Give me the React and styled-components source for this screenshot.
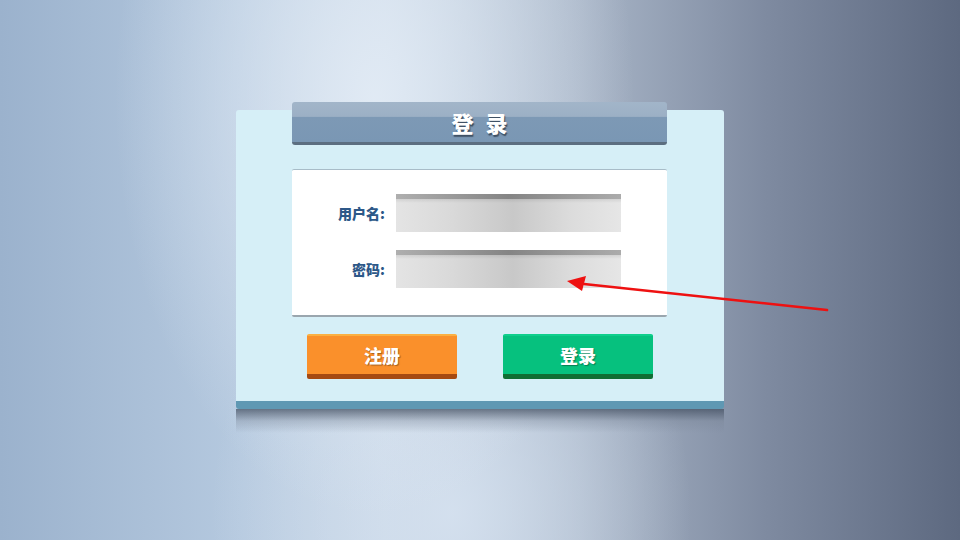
import React from "react";
import styled, { createGlobalStyle } from "styled-components";

const Global = createGlobalStyle`
  html, body { margin: 0; padding: 0; }
  body {
    width: 960px; height: 540px; overflow: hidden;
    font-family: "Noto Sans CJK SC", "Noto Sans", sans-serif;
  }
`;

const Page = styled.div`
  position: relative;
  width: 960px;
  height: 540px;
  display: flex;
  justify-content: center;
  padding-top: 102px;
  box-sizing: border-box;
  background:
    radial-gradient(ellipse 260px 420px at 39% 18%, rgba(226,235,245,0.95), rgba(226,235,245,0) 100%),
    radial-gradient(ellipse 240px 300px at 47% 95%, rgba(214,226,240,0.9), rgba(214,226,240,0) 100%),
    linear-gradient(to right, #9bb2cd 0%, #b5c9df 25%, #c6d5e5 40%, #a9b6c8 60%, #7e8aa0 80%, #5d6980 100%);
`;

const Stack = styled.div`
  width: 488px;
  display: flex;
  flex-direction: column;
`;

const Card = styled.div`
  margin-top: 8px;
  background: #d6eff7;
  border-radius: 3px;
  border-bottom: 8px solid #5f98b3;
  padding: 0 57px 22px 56px;
  display: flex;
  flex-direction: column;
  align-items: stretch;
`;

const TitleBar = styled.div`
  margin-top: -8px;
  height: 40px;
  border-radius: 3px;
  border-bottom: 3px solid #5c6e80;
  background: linear-gradient(to bottom, #a2b5c9 0%, #9cb0c5 36%, #7d99b5 38%, #7a97b4 100%);
  display: flex;
  align-items: center;
  justify-content: center;
  color: #fff;
  font-size: 22px;
  font-weight: 900;
  letter-spacing: 12px;
  padding-left: 12px;
  text-shadow: 1px 2px 1px #3f5063;
`;

const FormBox = styled.div`
  margin-top: 24px;
  background: #ffffff;
  border-radius: 2px;
  border-top: 1px solid #a8bcc8;
  border-bottom: 2px solid #9aa6ae;
  padding: 24px 44px 27px 0;
  display: flex;
  flex-direction: column;
  gap: 18px;
`;

const Row = styled.div`
  display: flex;
  align-items: center;
`;

const Label = styled.label`
  width: 93px;
  text-align: right;
  padding-right: 11px;
  color: #2d5888;
  font-size: 14px;
  font-weight: 900;
`;

const Field = styled.div`
  width: 225px;
  height: 38px;
  box-sizing: border-box;
  position: relative;
  background: linear-gradient(to right, #e4e4e4 0%, #d9d9d9 25%, #c8c8c8 52%, #dcdcdc 78%, #e6e6e6 100%);
  &::before {
    content: "";
    position: absolute;
    left: 0; right: 0; top: 0;
    height: 5px;
    background: linear-gradient(to right, #a9a9a9 0%, #7d7d7d 50%, #a5a5a5 100%);
    opacity: 0.9;
  }
  &::after {
    content: "";
    position: absolute;
    left: 0; right: 0; top: 5px;
    height: 4px;
    background: linear-gradient(to bottom, rgba(0,0,0,0.08), rgba(0,0,0,0));
  }
`;

const Buttons = styled.div`
  margin-top: 17px;
  display: flex;
  justify-content: space-between;
  padding: 0 14px 0 15px;
`;

const Button = styled.button`
  width: 150px;
  height: 45px;
  border: none;
  border-radius: 2px;
  border-top: 2px solid ${p => p.$top};
  border-bottom: 5px solid ${p => p.$edge};
  background: ${p => p.$bg};
  color: #fff;
  font-family: inherit;
  font-size: 18px;
  font-weight: 900;
  text-shadow: 1px 1px 1px rgba(0,0,0,0.35);
  padding: 0;
  cursor: pointer;
`;

const Reflection = styled.div`
  height: 24px;
  background: linear-gradient(to bottom, rgba(70,82,100,0.75), rgba(120,132,150,0.35) 50%, rgba(150,165,185,0) 100%);
`;

const Arrow = styled.svg`
  position: absolute;
  left: 0;
  top: 0;
  pointer-events: none;
`;

export default function App() {
  return (
    <>
      <Global />
      <Page>
        <Stack>
          <Card>
            <TitleBar>登录</TitleBar>
            <FormBox>
              <Row>
                <Label>用户名:</Label>
                <Field />
              </Row>
              <Row>
                <Label>密码:</Label>
                <Field />
              </Row>
            </FormBox>
            <Buttons>
              <Button $bg="#fa902b" $top="#fbb042" $edge="#a54a12">注册</Button>
              <Button $bg="#06c17e" $top="#0fcf8c" $edge="#0f6e33">登录</Button>
            </Buttons>
          </Card>
          <Reflection />
        </Stack>
        <Arrow width="960" height="540" viewBox="0 0 960 540">
          <line x1="827" y1="310" x2="584" y2="284" stroke="#ee1111" strokeWidth="2.6" strokeLinecap="round" />
          <polygon points="567,281 586,276 582,291" fill="#ee1111" />
        </Arrow>
      </Page>
    </>
  );
}
